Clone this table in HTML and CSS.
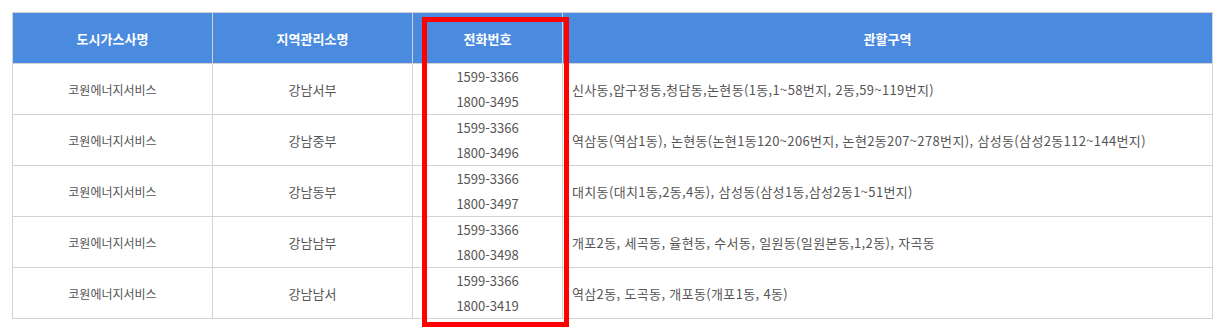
FILE: index.html
```html
<!DOCTYPE html>
<html lang="ko">
<head>
<meta charset="utf-8">
<link rel="stylesheet" href="styles.css">
</head>
<body>
<div class="wrap">
  <table class="gas">
    <colgroup>
      <col class="c1"><col class="c2"><col class="c3"><col class="c4">
    </colgroup>
    <thead>
      <tr><th>도시가스사명</th><th>지역관리소명</th><th>전화번호</th><th>관할구역</th></tr>
    </thead>
    <tbody>
      <tr><td>코원에너지서비스</td><td class="office">강남서부</td><td class="tel">1599-3366<br>1800-3495</td><td class="area">신사동,압구정동,청담동,논현동(1동,1~58번지, 2동,59~119번지)</td></tr>
      <tr><td>코원에너지서비스</td><td class="office">강남중부</td><td class="tel">1599-3366<br>1800-3496</td><td class="area">역삼동(역삼1동), 논현동(논현1동120~206번지, 논현2동207~278번지), 삼성동(삼성2동112~144번지)</td></tr>
      <tr><td>코원에너지서비스</td><td class="office">강남동부</td><td class="tel">1599-3366<br>1800-3497</td><td class="area">대치동(대치1동,2동,4동), 삼성동(삼성1동,삼성2동1~51번지)</td></tr>
      <tr><td>코원에너지서비스</td><td class="office">강남남부</td><td class="tel">1599-3366<br>1800-3498</td><td class="area">개포2동, 세곡동, 율현동, 수서동, 일원동(일원본동,1,2동), 자곡동</td></tr>
      <tr><td>코원에너지서비스</td><td class="office">강남남서</td><td class="tel">1599-3366<br>1800-3419</td><td class="area">역삼2동, 도곡동, 개포동(개포1동, 4동)</td></tr>
    </tbody>
  </table>
  <div class="highlight"></div>
</div>
</body>
</html>
```
FILE: styles.css
```css
html, body {
  margin: 0;
  padding: 0;
  background: #fff;
}
.wrap {
  position: relative;
  padding: 12px;
  font-family: "Noto Sans CJK KR", "Noto Sans", sans-serif;
}
.gas {
  width: 1200px;
  border-collapse: collapse;
  table-layout: fixed;
}
.c1 { width: 200px; }
.c2 { width: 200px; }
.c3 { width: 150px; }
.c4 { width: 650px; }
.gas th {
  background: #4a8be0;
  color: #fff;
  font-size: 13px;
  font-weight: bold;
  height: 50px;
  padding: 0;
  border: 1px solid #d2d2d2;
  text-align: center;
}
.gas td {
  height: 50px;
  padding: 0;
  border: 1px solid #d2d2d2;
  color: #555;
  font-size: 12px;
  text-align: center;
  line-height: 25px;
}
.gas td.office {
  font-size: 13px;
}
.gas td.tel {
  font-size: 13px;
}
.gas td.area {
  text-align: left;
  padding-left: 9px;
  font-size: 13px;
  letter-spacing: 0.35px;
}
.highlight {
  position: absolute;
  left: 422px;
  top: 17px;
  width: 137px;
  height: 300px;
  border: 5px solid #ff0000;
}
```
